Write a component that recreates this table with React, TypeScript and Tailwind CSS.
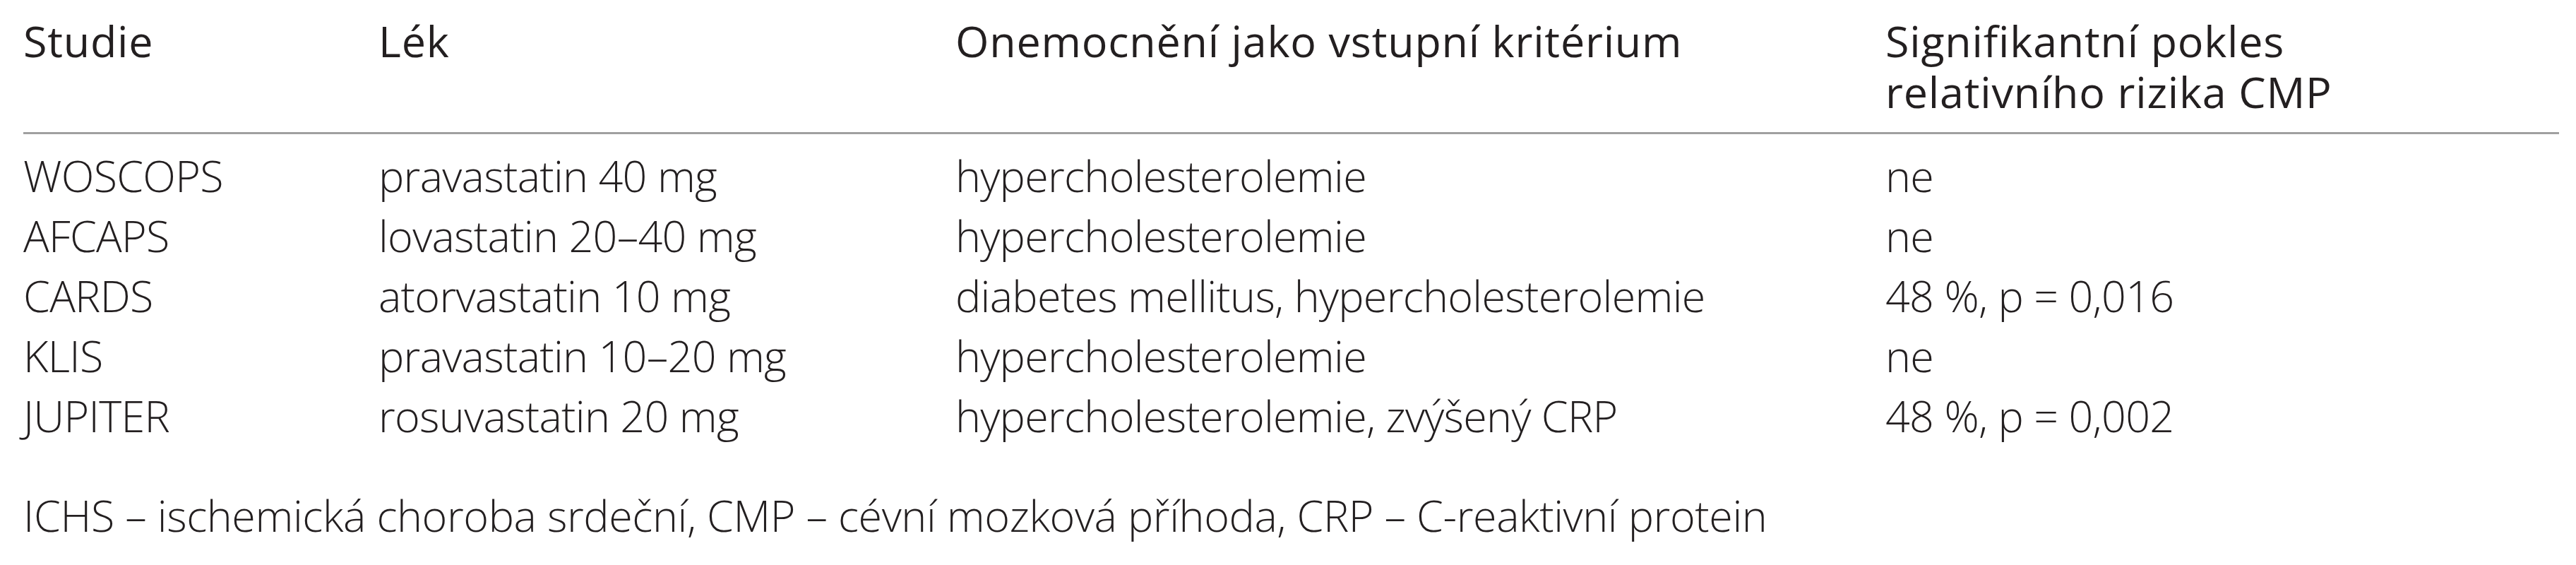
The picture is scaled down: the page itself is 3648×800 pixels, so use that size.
import React from "react";

const rows = [
  ["WOSCOPS", "pravastatin 40 mg", "hypercholesterolemie", "ne"],
  ["AFCAPS", "lovastatin 20–40 mg", "hypercholesterolemie", "ne"],
  ["CARDS", "atorvastatin 10 mg", "diabetes mellitus, hypercholesterolemie", "48 %, p = 0,016"],
  ["KLIS", "pravastatin 10–20 mg", "hypercholesterolemie", "ne"],
  ["JUPITER", "rosuvastatin 20 mg", "hypercholesterolemie, zvýšený CRP", "48 %, p = 0,002"],
];

export default function App() {
  return (
    <div className="w-[3648px] h-[800px] bg-white text-[#231f20] text-[61px] font-['Open_Sans',sans-serif] overflow-hidden">
      <div className="ml-[33px] w-[3591px] pt-[22px]">
        <div className="grid grid-cols-[503px_817px_1317px_1fr] leading-[72px] font-normal tracking-[0.8px] pb-[21px] border-b-[3px] border-[#a0a0a0]">
          <div>Studie</div>
          <div>Lék</div>
          <div>Onemocnění jako vstupní kritérium</div>
          <div>
            Signifikantní pokles
            <br />
            relativního rizika CMP
          </div>
        </div>
        <div className="pt-[16px] font-light tracking-[-0.7px] leading-[85px]">
          {rows.map((r) => (
            <div key={r[0]} className="grid grid-cols-[503px_817px_1317px_1fr]">
              {r.map((c, i) => (
                <div key={i}>{c}</div>
              ))}
            </div>
          ))}
        </div>
        <div className="mt-[56px] font-light tracking-[-0.4px] leading-[85px]">
          ICHS – ischemická choroba srdeční, CMP – cévní mozková příhoda, CRP – C-reaktivní protein
        </div>
      </div>
    </div>
  );
}
